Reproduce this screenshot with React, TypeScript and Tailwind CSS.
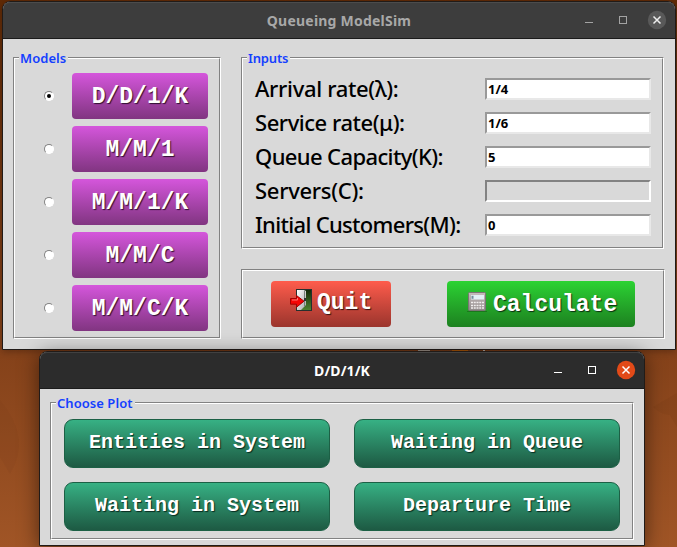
import type { ReactNode } from "react";

const ui = "font-['Noto_Sans','Open_Sans',sans-serif]";
const mono = "font-['Liberation_Mono',monospace] font-bold text-white whitespace-pre leading-none";

function Groove({ className, legend, legendClass, children }: { className: string; legend?: string; legendClass?: string; children: ReactNode }) {
  return (
    <div className={`relative border border-t-[#828282] border-l-[#828282] border-r-white border-b-white ${className}`}>
      <div className="flex h-full w-full border border-t-white border-l-white border-r-[#828282] border-b-[#828282]">{children}</div>
      {legend && (
        <div className={`absolute -top-[9px] left-[5px] flex h-[18px] items-center bg-[#d9d9d9] pl-px text-[13px] leading-none font-semibold whitespace-nowrap text-[#1440ff] ${legendClass}`}>
          {legend}
        </div>
      )}
    </div>
  );
}

function TitleBar({ title, active }: { title: string; active?: boolean }) {
  const ink = active ? "#ffffff" : "#a3a3a3";
  return (
    <div className={`relative flex h-[37px] shrink-0 items-center justify-center rounded-t-[7px] border-b border-b-[#1b1b1b] ${active ? "bg-[#2c2c2c] shadow-[inset_0_1px_0_#414141]" : "bg-[#3d3d3d] shadow-[inset_0_1px_0_#4c4c4c]"}`}>
      <span className={`pt-px text-[14px] leading-none font-bold ${active ? "text-white tracking-[0.1px]" : "text-[#a8a8a8] tracking-[0.22px]"}`}>{title}</span>
      <svg className="absolute top-[8px] right-[8px]" width="88" height="20" viewBox="0 0 88 20" fill="none">
        <path d="M6 12.5h8" stroke={ink} />
        <rect x="40.5" y="6.5" width="7" height="7" stroke={ink} />
        <circle cx="78" cy="10" r="9.2" fill={active ? "#e24a18" : "#595959"} />
        <path d="M74.5 6.5l7 7M81.5 6.5l-7 7" stroke={active ? "#fff" : "#eee"} strokeWidth="1.5" />
      </svg>
    </div>
  );
}

function Radio({ checked }: { checked?: boolean }) {
  return (
    <span className="flex size-[10px] items-center justify-center rounded-full border border-t-[#828282] border-r-white border-b-white border-l-[#828282] bg-white">
      {checked && <span className="size-1 rounded-full bg-black" />}
    </span>
  );
}

function ModelButton({ label }: { label: string }) {
  return (
    <button className={`flex h-[46px] w-[136px] items-center justify-center rounded-[4px] bg-linear-to-b from-[#d556dc] to-[#813581] pt-[3px] text-[23px] text-shadow-[1px_1px_1px_#301030] ${mono}`}>
      {label}
    </button>
  );
}

function PlotButton({ label }: { label: string }) {
  return (
    <button className={`flex h-[49px] w-[266px] items-center justify-center rounded-[9px] border border-[#1c6045] bg-linear-to-b from-[#37b184] to-[#1d5a43] pb-px text-[20px] text-shadow-[1px_1px_1px_#082c20] ${mono}`}>
      {label}
    </button>
  );
}

function Field({ label, value, tracking, disabled }: { label: string; value: string; tracking: string; disabled?: boolean }) {
  return (
    <div className="flex h-[22px] items-center justify-between">
      <span className={`pb-[3px] text-[22px] leading-none font-medium whitespace-nowrap text-black ${tracking}`}>{label}</span>
      <span className={`flex h-[22px] w-[166px] items-center border-2 pl-px text-[13px] leading-none font-bold text-black ${disabled ? "border-t-[#828282] border-l-[#828282] border-r-white border-b-white" : "border-t-[#999999] border-l-[#999999] border-r-[#e8e8e8] border-b-[#e8e8e8] bg-white"}`}>
        {value}
      </span>
    </div>
  );
}

function DoorIcon() {
  return (
    <svg width="23" height="23" viewBox="0 0 23 23">
      <defs>
        <linearGradient id="yard" x1="0" y1="0" x2="0" y2="1"><stop stopColor="#102708" /><stop offset="1" stopColor="#4f8431" /></linearGradient>
        <linearGradient id="leaf" x1="0" y1="0" x2="1" y2="1"><stop stopColor="#ffffff" /><stop offset="1" stopColor="#aaaaaa" /></linearGradient>
      </defs>
      <rect x="6.5" y="1.5" width="15" height="21" fill="url(#yard)" stroke="#26302e" />
      <path d="M7 2h7l2 1v14l-5 5H7z" fill="url(#leaf)" />
      <path d="M14.5 2.5v16" stroke="#77807a" />
      <path d="M14 10h2v3h-2z" fill="#333" />
      <path d="M.5 10.5h6v-3L14 13.2l-7.5 6v-3h-6z" fill="#f50505" stroke="#a60000" />
      <path d="M2 12h5.5v-2" fill="none" stroke="#ff7777" />
    </svg>
  );
}

function CalculatorIcon() {
  return (
    <svg width="20" height="20" viewBox="0 0 20 20">
      <defs><linearGradient id="case" x1="0" y1="0" x2="0" y2="1"><stop stopColor="#c6bcbc" /><stop offset="1" stopColor="#8f8989" /></linearGradient></defs>
      <path d="M0 19.5h20" stroke="#176017" opacity=".6" />
      <rect x="1.5" y=".5" width="17" height="18" rx="1" fill="url(#case)" stroke="#7b7575" />
      <rect x="4" y="3" width="13" height="4.5" fill="#e2f0f6" />
      <path d="M5.5 3.8v3" stroke="#718c9a" strokeWidth="2" />
      <path d="M4 10.5h13M4 13.5h13M4 16h13" stroke="#f2efef" strokeWidth="1.6" strokeDasharray="2 .75" />
    </svg>
  );
}

export default function App() {
  return (
    <div className={`relative h-[547px] w-[677px] overflow-hidden bg-linear-to-b from-[#602a06] via-[#85421a] via-65% to-[#a05526] ${ui}`}>
      <svg className="absolute inset-0" width="677" height="547">
        <path d="M0 400q32 38 10 74L0 457z" fill="#7b3f18" opacity=".15" />
        <path d="M653 407l24-14v34l-7-12q-8 0-17-8z" fill="#6f3512" opacity=".16" />
        <path d="M418 350.5h12" stroke="#b1a39a" />
        <path d="M452 350.5h16M260 546h70" stroke="#c06008" />
        <path d="M483 350.5h2" stroke="#d0c0b0" />
      </svg>

      <section className="absolute top-px left-[2px] flex h-[349px] w-[674px] flex-col rounded-t-lg border border-[#211b18] bg-[#d9d9d9] shadow-[0_2px_7px_rgba(0,0,0,0.25)]">
        <TitleBar title="Queueing ModelSim" />
        <div className="flex pt-[18px] pl-[10px]">
          <Groove className="h-[282px] w-[208px]" legend="Models" legendClass="w-[49px] tracking-[0.05px]">
            <div className="flex w-full flex-col gap-[7px] pt-[14px] pl-[29px]">
              {["D/D/1/K", "M/M/1", "M/M/1/K", "M/M/C", "M/M/C/K"].map((m, i) => (
                <div key={m} className="flex items-center gap-[18px]">
                  <Radio checked={i === 0} />
                  <ModelButton label={m} />
                </div>
              ))}
            </div>
          </Groove>
          <div className="ml-5 flex flex-col gap-5">
            <Groove className="h-[192px] w-[423px]" legend="Inputs" legendClass="w-[43px] tracking-[-0.15px]">
              <div className="flex w-full flex-col gap-3 pt-[19px] pr-[11px] pl-3">
                <Field label="Arrival rate(λ):" value="1/4" tracking="tracking-[-0.33px]" />
                <Field label="Service rate(μ):" value="1/6" tracking="tracking-[-0.46px]" />
                <Field label="Queue Capacity(K):" value="5" tracking="tracking-[-0.62px]" />
                <Field label="Servers(C):" value="" tracking="tracking-[-0.3px]" disabled />
                <Field label="Initial Customers(M):" value="0" tracking="tracking-[-0.68px]" />
              </div>
            </Groove>
            <Groove className="h-[70px] w-[424px]">
              <div className="flex w-full gap-14 pt-[10px] pl-7">
                <button className={`flex h-[46px] w-[120px] gap-1 rounded-[4px] bg-linear-to-b from-[#ff5c4c] to-[#9b352d] pt-[7px] pl-[19px] text-[23px] text-shadow-[1px_1px_1px_#351010] ${mono}`}>
                  <DoorIcon />
                  <span className="pt-[4px]">Quit</span>
                </button>
                <button className={`flex h-[46px] w-[188px] gap-[6px] rounded-[4px] bg-linear-to-b from-[#2bd333] to-[#1d8120] pt-[11px] pl-5 text-[23px] text-shadow-[1px_1px_1px_#0b3010] ${mono}`}>
                  <CalculatorIcon />
                  <span className="pt-[2px]">Calculate</span>
                </button>
              </div>
            </Groove>
          </div>
        </div>
      </section>

      <section className="absolute top-[351px] left-[39px] flex h-[195px] w-[606px] flex-col rounded-t-lg border border-[#211b18] bg-[#d9d9d9] shadow-[0_3px_20px_rgba(0,0,0,0.5)]">
        <TitleBar title="D/D/1/K" active />
        <div className="pt-[13px] pl-[10px]">
          <Groove className="h-[138px] w-[584px]" legend="Choose Plot" legendClass="w-[79px] tracking-[0.05px]">
            <div className="grid grid-cols-[266px_266px] content-start gap-x-6 gap-y-[14px] pt-[15px] pl-3">
              <PlotButton label="Entities in System" />
              <PlotButton label="Waiting in Queue" />
              <PlotButton label="Waiting in System" />
              <PlotButton label="Departure Time" />
            </div>
          </Groove>
        </div>
      </section>
    </div>
  );
}
